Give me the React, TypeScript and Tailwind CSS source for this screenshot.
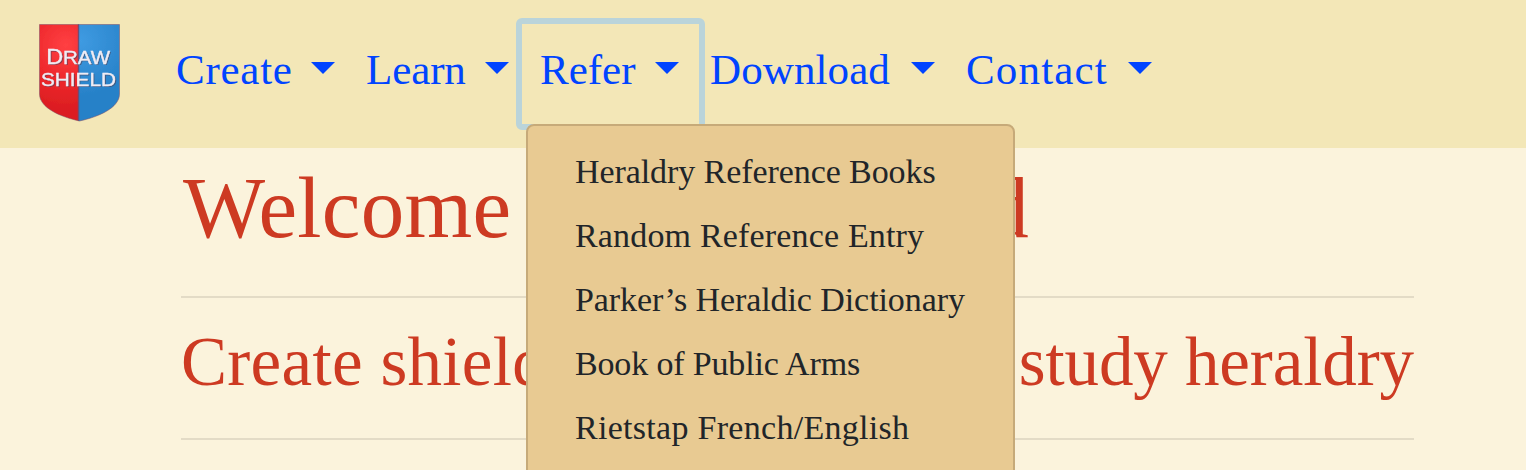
import React from "react";

const navItems = [
  { label: "Create", width: "w-[159px]", tracking: "tracking-[0.75px]" },
  { label: "Learn", width: "w-[143px]", tracking: "tracking-[-0.1px]" },
  { label: "Refer", width: "w-[139px]", tracking: "tracking-[0px]", open: true },
  { label: "Download", width: "w-[225px]", tracking: "tracking-[0.1px]" },
  { label: "Contact", width: "w-[186px]", tracking: "tracking-[1.15px]" },
];

const references = [
  { label: "Heraldry Reference Books", tracking: "tracking-[-0.08px]" },
  { label: "Random Reference Entry", tracking: "tracking-[0.17px]" },
  { label: "Parker’s Heraldic Dictionary", tracking: "tracking-[-0.08px]" },
  { label: "Book of Public Arms", tracking: "tracking-[-0.16px]" },
  { label: "Rietstap French/English", tracking: "tracking-[0.29px]" },
];

function ShieldText() {
  return (
    <>
      <text x="8.2" y="40.5" fontSize="22" textLength="17" lengthAdjust="spacingAndGlyphs">D</text>
      <text x="25" y="40.5" fontSize="18.5" textLength="47" lengthAdjust="spacingAndGlyphs">RAW</text>
      <text x="3" y="62.5" fontSize="19" textLength="75" lengthAdjust="spacingAndGlyphs">SHIELD</text>
    </>
  );
}

function Logo() {
  return (
    <svg width="82" height="99" viewBox="0 0 82 99" className="block shrink-0" aria-label="Draw Shield">
      <defs>
        <radialGradient id="red" gradientUnits="userSpaceOnUse" cx="28" cy="22" r="65">
          <stop offset="0" stopColor="#ff4043" />
          <stop offset="0.5" stopColor="#ef292d" />
          <stop offset="1" stopColor="#db1d21" />
        </radialGradient>
        <radialGradient id="blue" gradientUnits="userSpaceOnUse" cx="42" cy="18" r="55">
          <stop offset="0" stopColor="#3f9be2" />
          <stop offset="1" stopColor="#2781c8" />
        </radialGradient>
        <clipPath id="shield">
          <path d="M1.5 1.5H81.5V71C81.5 85 60 94 41.5 98C23 94 1.5 85 1.5 71Z" />
        </clipPath>
        <filter id="soft" x="-5%" y="-5%" width="110%" height="110%">
          <feGaussianBlur stdDeviation="0.75" />
        </filter>
      </defs>
      <g filter="url(#soft)">
        <g clipPath="url(#shield)">
          <rect width="41" height="99" fill="url(#red)" />
          <rect x="40" width="42" height="99" fill="url(#blue)" />
          <path d="M40.5 0V99" stroke="#6d4e75" strokeWidth="1.4" />
        </g>
        <path d="M1.5 1.5H81.5V71C81.5 85 60 94 41.5 98C23 94 1.5 85 1.5 71Z" fill="none" stroke="#7c4b65" strokeOpacity="0.5" strokeWidth="1" />
        <g fontFamily="Liberation Sans, sans-serif" fill="#4a3f55" opacity="0.6" transform="translate(1.2 1.2)">
          <ShieldText />
        </g>
        <g fontFamily="Liberation Sans, sans-serif" fill="#efecf4" stroke="#efecf4" strokeWidth="0.4">
          <ShieldText />
        </g>
      </g>
    </svg>
  );
}

function ReferenceMenu() {
  return (
    <div className="absolute left-[-14px] top-[88px] z-10 h-[400px] w-[489px] rounded-lg border-2 border-[#c6aa79] bg-[#e8ca92] pt-[14px] pl-[47px] text-[34px] leading-[64px] text-[#212529]">
      {references.map((item) => (
        <a key={item.label} className={`block whitespace-nowrap ${item.tracking}`}>
          {item.label}
        </a>
      ))}
    </div>
  );
}

export default function App() {
  return (
    <div className="h-[470px] overflow-hidden bg-[#fbf3dc] font-['Liberation_Serif',serif]">
      <header className="flex h-[148px] items-start bg-[#f3e7b7] pt-[23px] pl-[38px]">
        <Logo />
        <nav className="ml-[56px] mt-[13px] flex gap-[31px] text-[43px] leading-[66px] text-[#0044ff]">
          {navItems.map((item) => (
            <div key={item.label} className={`relative flex justify-between ${item.width}`}>
              {item.open && (
                <span className="absolute left-[-24px] top-[-18px] h-[112px] w-[189px] rounded-[6px] border-[6px] border-[#bad4da]" />
              )}
              <span className={`pt-px ${item.tracking}`}>{item.label}</span>
              <svg width="24" height="12" viewBox="0 0 24 12" className="mt-[26px] shrink-0">
                <path d="M0 0H24L12 12Z" fill="currentColor" />
              </svg>
              {item.open && <ReferenceMenu />}
            </div>
          ))}
        </nav>
      </header>
      <main className="ml-[181px] w-[1233px] text-[#cd3a22]">
        <h1 className="flex h-[148px] w-[847px] justify-between whitespace-nowrap pt-[10px] pl-[2px] text-[87px] leading-[100px]">
          <span className="tracking-[0.3px]">Welcome</span>
          <span className="tracking-[-0.7px]">to DrawShield</span>
        </h1>
        <hr className="border-t-2 border-[#e3dbc6]" />
        <h2 className="flex h-[140px] justify-between whitespace-nowrap pt-[24px] text-[69px] leading-[80px]">
          <span className="tracking-[0.3px]">Create shields from blazon &amp;</span>
          <span className="tracking-[-0.1px]">study heraldry</span>
        </h2>
        <hr className="border-t-2 border-[#e3dbc6]" />
      </main>
    </div>
  );
}
